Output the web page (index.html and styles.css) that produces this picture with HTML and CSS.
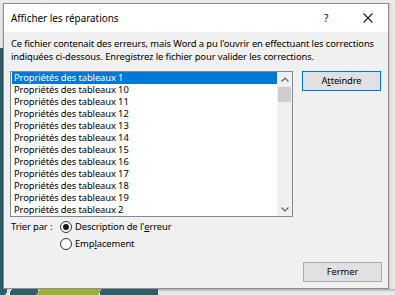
FILE: index.html
```html
<!DOCTYPE html>
<html lang="fr">
<head>
<meta charset="utf-8">
<title>Afficher les réparations</title>
<link rel="stylesheet" href="styles.css">
</head>
<body>
<div class="screen">
  <div class="top-strip"></div>
  <div class="left-strip"></div>
  <div class="dialog">
    <div class="titlebar">
      <span class="title">Afficher les réparations</span>
      <span class="help">?</span>
      <span class="close"><svg width="10" height="10" viewBox="0 0 10 10"><path d="M0.5 0.5 L9.5 9.5 M9.5 0.5 L0.5 9.5" stroke="#1a1a1a" stroke-width="1.1" fill="none"/></svg></span>
    </div>
    <div class="content">
      <p class="intro">Ce fichier contenait des erreurs, mais Word a pu l'ouvrir en effectuant les corrections<br>indiquées ci-dessous. Enregistrez le fichier pour valider les corrections.</p>
      <div class="main">
        <div class="listbox">
          <ul class="items">
            <li class="selected">Propriétés des tableaux 1</li>
            <li>Propriétés des tableaux 10</li>
            <li>Propriétés des tableaux 11</li>
            <li>Propriétés des tableaux 12</li>
            <li>Propriétés des tableaux 13</li>
            <li>Propriétés des tableaux 14</li>
            <li>Propriétés des tableaux 15</li>
            <li>Propriétés des tableaux 16</li>
            <li>Propriétés des tableaux 17</li>
            <li>Propriétés des tableaux 18</li>
            <li>Propriétés des tableaux 19</li>
            <li>Propriétés des tableaux 2</li>
          </ul>
          <div class="scrollbar">
            <span class="arrow"><svg width="8" height="5" viewBox="0 0 8 5"><path d="M0.5 4.5 L4 1 L7.5 4.5" stroke="#606060" stroke-width="1.2" fill="none"/></svg></span>
            <span class="thumb"></span>
            <span class="track"></span>
            <span class="arrow"><svg width="8" height="5" viewBox="0 0 8 5"><path d="M0.5 0.5 L4 4 L7.5 0.5" stroke="#606060" stroke-width="1.2" fill="none"/></svg></span>
          </div>
        </div>
        <div class="side">
          <button class="btn btn-default">A<u>t</u>teindre</button>
        </div>
      </div>
      <div class="sort">
        <span class="sort-label">Trier par :</span>
        <div class="options">
          <label class="radio"><span class="dot checked"></span>Description de l'<u>e</u>rreur</label>
          <label class="radio"><span class="dot"></span>Emp<u>l</u>acement</label>
        </div>
      </div>
      <div class="footer">
        <button class="btn">Fermer</button>
      </div>
    </div>
  </div>
  <div class="right-strip"></div>
  <div class="bottom-strip">
    <span class="seg teal s1"></span>
    <span class="seg stripe"></span>
    <span class="seg teal s2"></span>
    <span class="seg green"></span>
    <span class="seg teal s3"></span>
    <span class="seg rest"></span>
  </div>
</div>
</body>
</html>
```

FILE: styles.css
```css
* { box-sizing: border-box; }
html, body { margin: 0; padding: 0; }
body {
  width: 395px;
  height: 295px;
  overflow: hidden;
  font-family: "Noto Sans", Lato, sans-serif;
  font-size: 9.4px;
  letter-spacing: -0.1px;
  color: #000;
  background: #e9e9e9;
}
.screen {
  display: grid;
  grid-template-columns: 3px 386px 6px;
  grid-template-rows: 3px 286px 6px;
  width: 395px;
  height: 295px;
}
.top-strip {
  grid-column: 1 / -1;
  background: #ececec;
}
.left-strip {
  background: linear-gradient(to bottom, #e6e6e6 0, #e6e6e6 45px, #2f5d68 45px);
}
.right-strip {
  background: linear-gradient(to right, #c9c9c9 0, #e4e4e4 2px, #ececec 100%);
}
.bottom-strip {
  grid-column: 1 / -1;
  display: flex;
}
.seg { height: 100%; }
.teal { background: #2f5d68; }
.s1 { width: 7px; }
.stripe { width: 3px; background: #dfe6e8; transform: skewX(-35deg); }
.s2 { width: 28px; }
.green { width: 62px; background: #9caf3b; transform: skewX(-35deg); }
.s3 { width: 58px; }
.rest {
  flex: 1;
  background: linear-gradient(to bottom, #a8a8a8 0, #d8d8d8 2px, #e9e9e9 3px);
}
.dialog {
  border: 1px solid #8e8e8e;
  background: #f0f0f0;
  display: flex;
  flex-direction: column;
  box-shadow: 0 1px 2px rgba(0,0,0,0.25);
}
.titlebar {
  height: 28px;
  background: #ffffff;
  display: flex;
  align-items: center;
  padding-left: 7px;
  padding-bottom: 1px;
}
.title {
  font-size: 9.9px;
  letter-spacing: 0;
  flex: 1;
}
.help {
  font-size: 10px;
  width: 10px;
  margin-right: 29px;
}
.close {
  display: flex;
  margin-right: 15px;
}
.content {
  flex: 1;
  display: flex;
  flex-direction: column;
  padding: 0 6px 6px 6px;
}
.intro {
  margin: 5px 0 0 1px;
  line-height: 13px;
  white-space: nowrap;
}
.main {
  display: flex;
  margin-top: 8px;
}
.listbox {
  width: 283px;
  height: 146px;
  border: 1px solid #828790;
  background: #fff;
  display: flex;
}
.items {
  list-style: none;
  margin: 0;
  padding: 0 0 0 1px;
  flex: 1;
}
.items li {
  height: 12px;
  line-height: 12px;
  padding-left: 2px;
  white-space: nowrap;
}
.items li.selected {
  background: #0078d7;
  color: #fff;
}
.scrollbar {
  width: 15px;
  background: #f0f0f0;
  display: flex;
  flex-direction: column;
  align-items: center;
}
.arrow {
  height: 14px;
  width: 15px;
  display: flex;
  align-items: center;
  justify-content: center;
}
.thumb {
  width: 13px;
  height: 15px;
  margin-top: 1px;
  background: #cdcdcd;
}
.track { flex: 1; }
.side {
  margin-left: 9px;
}
.btn {
  width: 79px;
  height: 20px;
  padding: 0;
  font-family: inherit;
  font-size: 9.4px;
  letter-spacing: inherit;
  color: #000;
  background: #e1e1e1;
  border: 1px solid #adadad;
  line-height: 16px;
}
.btn-default {
  border: 1px solid #0078d7;
  box-shadow: inset 0 0 0 1px #cfe3f5;
}
.btn u { text-decoration-thickness: 1px; }
.sort {
  display: flex;
  margin-top: 1px;
  margin-left: 1px;
}
.sort-label {
  height: 17px;
  line-height: 17px;
  width: 49px;
  white-space: nowrap;
}
.options {
  display: flex;
  flex-direction: column;
}
.radio {
  height: 17px;
  display: flex;
  align-items: center;
  white-space: nowrap;
}
.dot {
  width: 12px;
  height: 12px;
  border: 1px solid #333;
  border-radius: 50%;
  background: #fff;
  margin-right: 3px;
  display: flex;
  align-items: center;
  justify-content: center;
}
.dot.checked::after {
  content: "";
  width: 6px;
  height: 6px;
  border-radius: 50%;
  background: #1a1a1a;
}
.footer {
  margin-top: auto;
  display: flex;
  justify-content: flex-end;
}
```
